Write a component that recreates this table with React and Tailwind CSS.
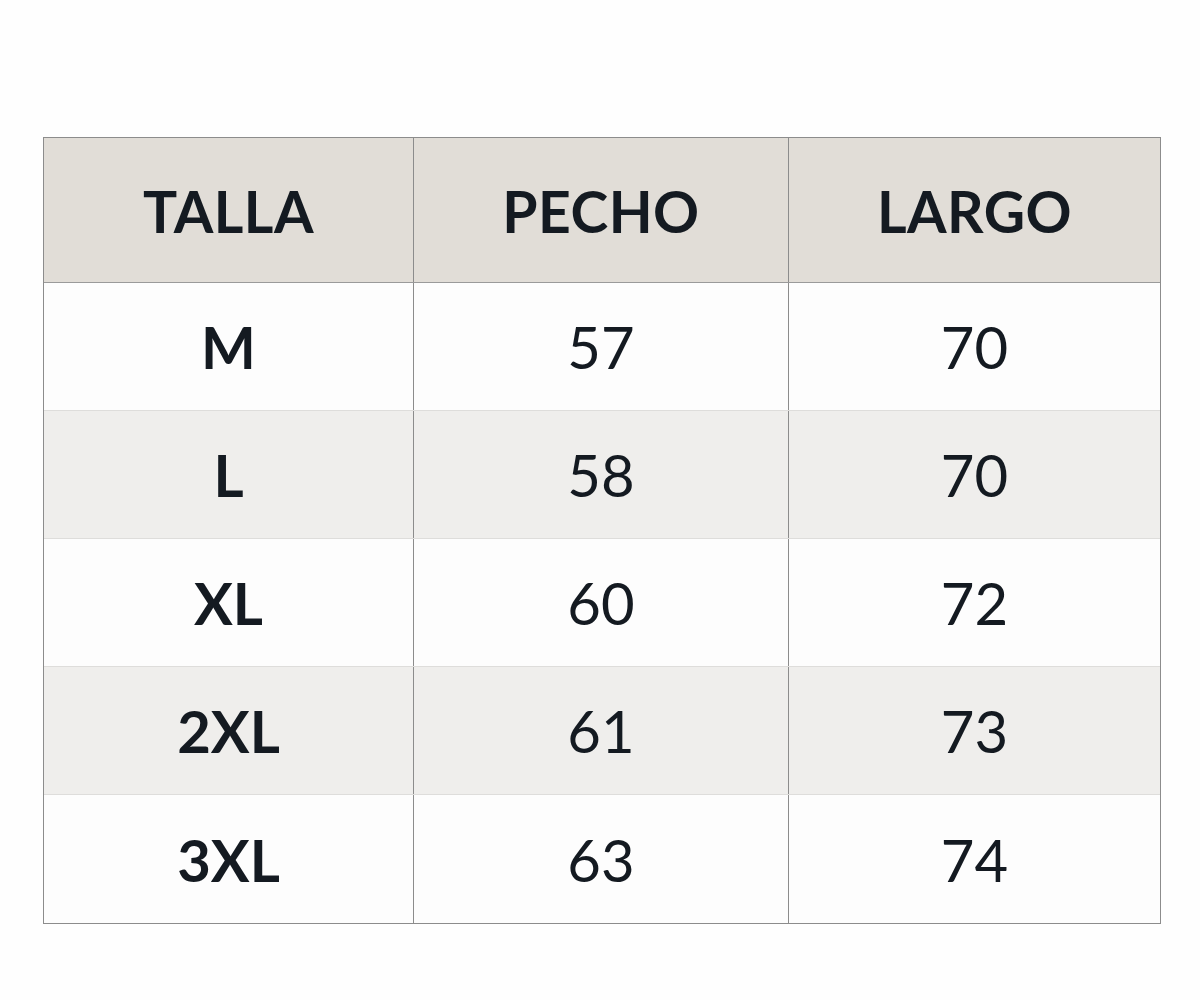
const rows = [
  ['M', '57', '70'],
  ['L', '58', '70'],
  ['XL', '60', '72'],
  ['2XL', '61', '73'],
  ['3XL', '63', '74'],
]

export default function App() {
  return (
    <div className="w-[1200px] h-[1000px] bg-[#fefefe] pt-[137px] pl-[43px] font-['Lato','Noto_Sans',sans-serif] text-[#141a21]">
      <div className="w-[1118px] border border-[#8c8c8c]">
        <div className="grid grid-cols-[370px_375px_1fr] h-[145px] bg-[#e1ddd7] border-b border-[#9a9a9a]">
          {['TALLA', 'PECHO', 'LARGO'].map((h, i) => (
            <div key={h} className={`flex items-center justify-center pt-[4px] text-[57px] font-bold tracking-[0.5px] ${i < 2 ? 'border-r border-[#8c8c8c]' : ''}`}>{h}</div>
          ))}
        </div>
        {rows.map((r, ri) => (
          <div key={r[0]} className={`grid grid-cols-[370px_375px_1fr] h-[128px] ${ri % 2 ? 'bg-[#efeeec]' : 'bg-[#fdfdfd]'} ${ri < rows.length - 1 ? 'border-b border-[#dedddb]' : ''}`}>
            {r.map((c, ci) => (
              <div key={ci} className={`flex items-center justify-center text-[58px] ${ci === 0 ? 'font-bold' : 'font-normal'} ${ci < 2 ? 'border-r border-[#8c8c8c]' : ''}`}>{c}</div>
            ))}
          </div>
        ))}
      </div>
    </div>
  )
}
